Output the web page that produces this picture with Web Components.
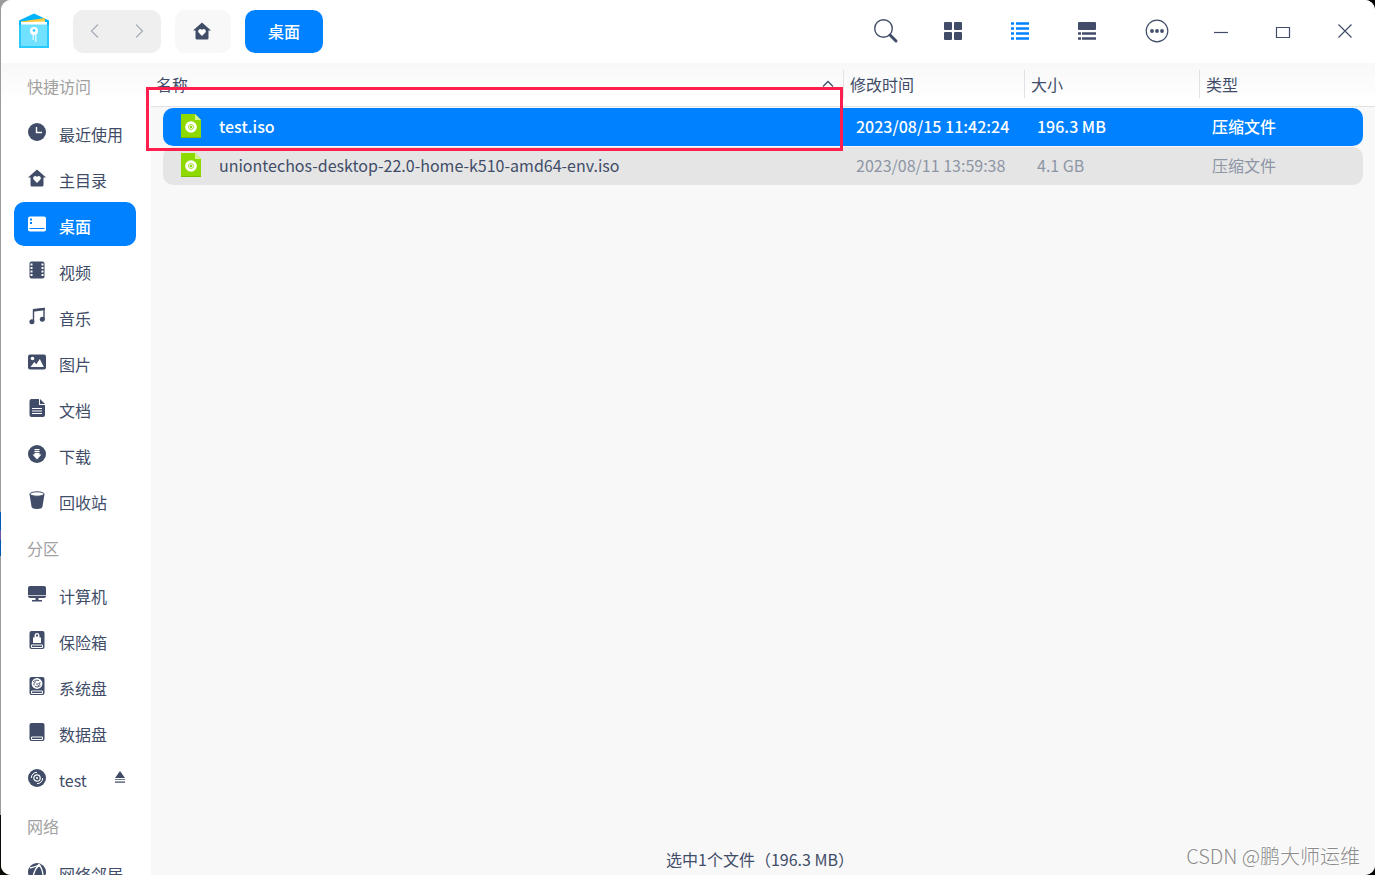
<!DOCTYPE html>
<html lang="zh-CN">
<head>
<meta charset="utf-8">
<title>文件管理器</title>
<style>
  * { box-sizing: border-box; }
  html {
    height: 100%;
    background:
      linear-gradient(#9c9c9c 0 512px, #0059b3 512px 530px, #6a57a5 530px 540px, #0059b3 540px 556px, #9c9c9c 556px 815px, #0b0b06 815px) left / 12px 100% no-repeat,
      #000;
  }
  body {
    margin: 0;
    height: 100%;
    overflow: hidden;
    color: #414d68;
    font: 16px/24px "Noto Sans CJK SC", "Noto Sans", sans-serif;
  }
</style>
</head>
<body>
<file-window>
  <title-bar slot="title" place="桌面"></title-bar>
  <side-group slot="side" heading="快捷访问">
    <side-item icon="recent">最近使用</side-item>
    <side-item icon="home">主目录</side-item>
    <side-item icon="desktop" active>桌面</side-item>
    <side-item icon="video">视频</side-item>
    <side-item icon="music">音乐</side-item>
    <side-item icon="picture">图片</side-item>
    <side-item icon="document">文档</side-item>
    <side-item icon="download">下载</side-item>
    <side-item icon="trash">回收站</side-item>
  </side-group>
  <side-group slot="side" heading="分区">
    <side-item icon="computer">计算机</side-item>
    <side-item icon="vault">保险箱</side-item>
    <side-item icon="system">系统盘</side-item>
    <side-item icon="disk">数据盘</side-item>
    <side-item icon="disc" ejectable>test</side-item>
  </side-group>
  <side-group slot="side" heading="网络">
    <side-item icon="network">网络邻居</side-item>
  </side-group>
  <file-table></file-table>
  <span slot="status">选中1个文件（196.3 MB）</span>
  <span slot="mark">CSDN @鹏大师运维</span>
</file-window>

<script>
// [width, height, svg content]
const icons = {
  logo: [34, 38, `
    <path d="M2 8.500 17 1.500l15 7V36H2z" fill="#00b4ff"/>
    <path d="M4 9.500 28 6v6H4z" fill="#ffc93c"/>
    <path d="M4 10.500l24-2v3z" fill="#ffe28a"/>
    <rect x="4" y="10" width="26" height="8" fill="#fff"/>
    <path d="M2 13h30v23H2z" fill="#29cbff"/>
    <path d="M4 12.500h26V34H4z" fill="#72e1ff"/>
    <path d="M15.500 20h1.500v8h-1.500zM18 20h1.500v10H18z" fill="#d3f6ff"/>
    <circle cx="17" cy="19" r="4" fill="#fff"/>
    <circle cx="17" cy="18.500" r="1.300" fill="#1cc4fa"/>`],
  back: [18, 18, `<path d="M12 2.500 5.500 9l6.500 6.500" fill="none" stroke="currentColor" stroke-width="1.300"/>`],
  forward: [18, 18, `<path d="m6 2.500 6.500 6.500L6 15.500" fill="none" stroke="currentColor" stroke-width="1.300"/>`],
  search: [26, 26, `
    <circle cx="10.500" cy="10.500" r="8.800" fill="none" stroke="currentColor" stroke-width="1.400"/>
    <path d="m17 17 6 6" stroke="currentColor" stroke-width="3" stroke-linecap="round"/>`],
  grid: [18, 18, `<g fill="currentColor"><rect width="8" height="8" rx="1"/><rect x="10" width="8" height="8" rx="1"/><rect y="10" width="8" height="8" rx="1"/><rect x="10" y="10" width="8" height="8" rx="1"/></g>`],
  list: [18, 18, `<path d="M0 .3h3v2.400H0zM5 .3h13v2.400H5zM0 5.300h3v2.400H0zM5 5.300h13v2.400H5zM0 10.300h3v2.400H0zM5 10.300h13v2.400H5zM0 15.300h3v2.400H0zM5 15.300h13v2.400H5z" fill="currentColor"/>`],
  detail: [18, 18, `
    <rect width="18" height="8" rx="1" fill="currentColor"/>
    <path d="M0 10.300h3v2.400H0zM4 10.300h14v2.400H4zM0 15.300h3v2.400H0zM4 15.300h14v2.400H4z" fill="currentColor"/>`],
  more: [24, 24, `
    <circle cx="12" cy="12" r="10.800" fill="none" stroke="currentColor" stroke-width="1.200"/>
    <g fill="currentColor"><circle cx="7" cy="12" r="1.900"/><circle cx="12" cy="12" r="1.900"/><circle cx="17" cy="12" r="1.900"/></g>`],
  minimize: [16, 16, `<path d="M1 9.500h14" stroke="currentColor" stroke-width="1.200"/>`],
  maximize: [16, 16, `<path d="M1.500 4.500h13v10h-13z" fill="none" stroke="currentColor" stroke-width="1.200"/>`],
  close: [16, 16, `<path d="m1.500 1.500 13 13m0-13-13 13" stroke="currentColor" stroke-width="1.200"/>`],
  sort: [12, 8, `<path d="m1 6.500 5-5 5 5" fill="none" stroke="currentColor" stroke-width="1.300"/>`],
  recent: [18, 18, `
    <circle cx="9" cy="9" r="9" fill="currentColor"/>
    <path d="M8.500 4v5.500H14" fill="none" stroke="#fff" stroke-width="1.400"/>`],
  home: [18, 18, `
    <path d="M9 .5 18 8.500h-2.500V16q0 1.500-1.500 1.500H4Q2.500 17.500 2.500 16V8.500H0z" fill="currentColor"/>
    <path d="M9 14 5.600 10.600A2 2 0 0 1 9 7.900a2 2 0 0 1 3.400 2.700z" fill="#fff"/>`],
  desktop: [18, 18, `
    <rect y="1.500" width="18" height="15" rx="2" fill="currentColor"/>
    <path d="M2 3.500h2v2H2zM2 7h2v2H2z" fill="#0081ff"/>
    <path d="M1.500 13.500h15" stroke="#0081ff" stroke-width="1.200"/>`],
  video: [18, 18, `
    <rect x="1.500" y=".5" width="15" height="17" rx="2" fill="currentColor"/>
    <path d="M2.500 2.500h2v2h-2zM2.500 6h2v2h-2zM2.500 9.500h2v2h-2zM2.500 13h2v2h-2zM13.500 2.500h2v2h-2zM13.500 6h2v2h-2zM13.500 9.500h2v2h-2zM13.500 13h2v2h-2z" fill="#fff"/>`],
  music: [18, 18, `
    <path d="M5.500 14.500V3.200L16 1.500v11" fill="none" stroke="currentColor" stroke-width="1.400"/>
    <path d="M5 2 16.700.7v2.500L5 4.700z" fill="currentColor"/>
    <circle cx="3.900" cy="14.800" r="2.500" fill="currentColor"/><circle cx="14.300" cy="12.200" r="2.500" fill="currentColor"/>`],
  picture: [18, 18, `
    <rect y="1.500" width="18" height="15" rx="2" fill="currentColor"/>
    <circle cx="4.500" cy="5.500" r="1.800" fill="#fff"/>
    <path d="m2.500 14 3.800-5 2 2.200L11.800 6l4 8z" fill="#fff"/>`],
  document: [18, 18, `
    <path d="M3.500 0H11v6h6v10q0 2-2 2H3.500q-2 0-2-2V2q0-2 2-2z" fill="currentColor"/>
    <path d="m12 0 5 5h-5z" fill="currentColor"/>
    <path d="M4 9.500h10M4 12h10M4 14.500h10" stroke="#fff" stroke-width="1.200"/>`],
  download: [18, 18, `
    <circle cx="9" cy="9" r="9" fill="currentColor"/>
    <path d="M6.500 4h5v1.300h-5zM6.500 6h5v1.200h-5zM6.500 8h5v1.500h2L9 14.500 4.500 9.500h2z" fill="#fff"/>`],
  trash: [18, 18, `
    <path d="M1.500 3h15l-2 12.500Q14 18 9 18t-5.500-2.500z" fill="currentColor"/>
    <ellipse cx="9" cy="3" rx="7" ry="2.200" fill="#fff" stroke="currentColor"/>`],
  computer: [18, 18, `
    <rect y="1" width="18" height="12" rx="2" fill="currentColor"/>
    <path d="M0 10.500h18" stroke="#fff" stroke-width=".7"/>
    <path d="M7.500 13h3v2h3.500v1.500H4V15h3.500z" fill="currentColor"/>`],
  vault: [18, 18, `
    <rect x="1.500" width="15" height="18" rx="2" fill="currentColor"/>
    <path d="M5 12V6.500h1.500V5a2.500 3 0 0 1 5 0v1.500H13V12z" fill="#fff"/>
    <path d="M8 5.500V4.500a1 1.200 0 0 1 2 0v1z" fill="currentColor"/>
    <path d="M3.500 14h11v2.500h-11z" fill="none" stroke="#fff"/>`],
  system: [18, 18, `
    <rect x="1.500" width="15" height="18" rx="2" fill="currentColor"/>
    <circle cx="9" cy="6.500" r="5.400" fill="#fff"/>
    <path d="M5 5q2.500-3 6-1.500M12.500 8.500Q10 11 7 9.500M6 8.500Q5 6 8 4.500M12 5q.5 3-2.500 4M8 7q1.500 1 2.500-1" fill="none" stroke="currentColor" stroke-width=".9"/>
    <path d="M3.500 14h11v2.500h-11z" fill="none" stroke="#fff"/>`],
  disk: [18, 18, `
    <rect x="1.500" width="15" height="18" rx="2" fill="currentColor"/>
    <path d="M3.500 14h11v2.500h-11z" fill="none" stroke="#fff"/>`],
  disc: [18, 18, `
    <circle cx="9" cy="9" r="9" fill="currentColor"/>
    <circle cx="9" cy="9" r="3.200" fill="none" stroke="#fff" stroke-width="1.200"/>
    <circle cx="9" cy="9" r="1.100" fill="#fff"/>
    <path d="M3.300 9A5.700 5.700 0 0 1 9 3.300M14.700 9A5.700 5.700 0 0 1 9 14.700" fill="none" stroke="#fff"/>`],
  network: [18, 18, `
    <circle cx="9" cy="9" r="9" fill="currentColor"/>
    <path d="M2 5q5-1 9-3M5 16Q5 8 11 2q4 4 4 12" fill="none" stroke="#fff" stroke-width="1.300"/>
    <circle cx="11" cy="2.500" r="1.600" fill="#fff"/>`],
  eject: [12, 12, `<path d="m6 0 5 7H1zM1 8h10v.8H1zM1 10.500h10v1.200H1z" fill="currentColor"/>`],
  iso: [22, 26, `
    <path d="M1 1h14l6 6v18H1z" fill="#8dd900"/>
    <path d="M15 1v6h6z" fill="#d4f58c"/>
    <path d="M1 24.500h20" stroke="#79bd00"/>
    <circle cx="11" cy="14" r="5.800" fill="#fff"/>
    <circle cx="11" cy="14" r="2.500" fill="none" stroke="#8dd900" stroke-width=".8"/>
    <circle cx="11" cy="14" r="1.200" fill="#8dd900"/>`],
};

class FileIcon extends HTMLElement {
  connectedCallback() {
    const [w, h, shape] = icons[this.getAttribute("name")];
    this.attachShadow({ mode: "open" }).innerHTML = `
      <style>
        :host { display: inline-flex; flex: none; }
        svg { display: block; }
      </style>
      <svg width="${w}" height="${h}" viewBox="0 0 ${w} ${h}" aria-hidden="true">${shape}</svg>`;
  }
}

class FileWindow extends HTMLElement {
  constructor() {
    super();
    this.attachShadow({ mode: "open" }).innerHTML = `
      <style>
        * { box-sizing: border-box; }
        :host {
          display: flex;
          flex-direction: column;
          height: 100%;
          margin-left: 1px;
          border-radius: 10px;
          overflow: hidden;
          background: #fff;
        }
        .body { display: flex; flex: 1; min-height: 0; }
        nav {
          flex: none;
          width: 150px;
          overflow: hidden;
          background: linear-gradient(#f8f8f8, #fff 38px);
        }
        main {
          position: relative;
          flex: 1;
          min-width: 0;
          display: flex;
          flex-direction: column;
          background: #f8f8f8;
        }
        .files { flex: 1; }
        footer { padding: 2px 6px 4px 0; text-align: center; }
        .mark {
          position: absolute;
          right: 15px;
          bottom: 4px;
          color: #8c8c8c;
          font-size: 20px;
          line-height: 30px;
          font-weight: 300;
          text-shadow: -1px -1px #fff;
        }
      </style>
      <slot name="title"></slot>
      <div class="body">
        <nav><slot name="side"></slot></nav>
        <main>
          <div class="files"><slot></slot></div>
          <footer><slot name="status"></slot></footer>
          <div class="mark"><slot name="mark"></slot></div>
        </main>
      </div>`;
  }
}

class TitleBar extends HTMLElement {
  connectedCallback() {
    this.attachShadow({ mode: "open" }).innerHTML = `
      <style>
        * { box-sizing: border-box; }
        :host {
          display: flex;
          flex: none;
          align-items: center;
          justify-content: space-between;
          height: 63px;
          padding: 0 10px 1px 16px;
          background: #fff;
        }
        div { display: flex; align-items: center; }
        button {
          display: flex;
          align-items: center;
          justify-content: center;
          width: 40px;
          height: 43px;
          padding: 0;
          border: 0;
          border-radius: 10px;
          background: none;
          color: inherit;
          font: inherit;
        }
        .left { gap: 14px; }
        .history {
          margin-left: 8px;
          border-radius: 10px;
          background: #efefef;
          color: #a9afba;
        }
        .history button { width: 44px; }
        .home { width: 56px; padding-right: 2px; background: #f8f8f8; }
        .place { width: 78px; background: #0081ff; color: #fff; font-weight: 500; }
        .views { gap: 27px; margin-right: 30px; }
        .more { margin-right: 24px; }
        .controls { gap: 22px; }
        .on { color: #0081ff; }
      </style>
      <div class="left">
        <file-icon name="logo"></file-icon>
        <div class="history">
          <button aria-label="后退" disabled><file-icon name="back"></file-icon></button>
          <button aria-label="前进" disabled><file-icon name="forward"></file-icon></button>
        </div>
        <button class="home" aria-label="主目录"><file-icon name="home"></file-icon></button>
        <button class="place">${this.getAttribute("place")}</button>
      </div>
      <div class="right">
        <div class="views">
          <button aria-label="搜索"><file-icon name="search"></file-icon></button>
          <button aria-label="图标视图"><file-icon name="grid"></file-icon></button>
          <button class="on" aria-label="列表视图"><file-icon name="list"></file-icon></button>
          <button aria-label="详细视图"><file-icon name="detail"></file-icon></button>
        </div>
        <button class="more" aria-label="更多"><file-icon name="more"></file-icon></button>
        <div class="controls">
          <button aria-label="最小化"><file-icon name="minimize"></file-icon></button>
          <button aria-label="最大化"><file-icon name="maximize"></file-icon></button>
          <button aria-label="关闭"><file-icon name="close"></file-icon></button>
        </div>
      </div>`;
  }
}

class SideGroup extends HTMLElement {
  connectedCallback() {
    this.attachShadow({ mode: "open" }).innerHTML = `
      <style>
        :host { display: block; padding-bottom: 2px; }
        h2 {
          margin: 0;
          padding: 0 26px;
          color: #a1a1a1;
          font-size: 16px;
          font-weight: 400;
          line-height: 46px;
        }
      </style>
      <h2>${this.getAttribute("heading")}</h2>
      <slot></slot>`;
  }
}

class SideItem extends HTMLElement {
  connectedCallback() {
    this.attachShadow({ mode: "open" }).innerHTML = `
      <style>
        * { box-sizing: border-box; }
        :host { display: flex; align-items: center; height: 46px; padding: 0 15px 0 13px; }
        a {
          flex: 1;
          display: flex;
          align-items: center;
          height: 44px;
          padding-left: 14px;
          border-radius: 10px;
          color: inherit;
          text-decoration: none;
          white-space: nowrap;
        }
        span { padding: 3px 0 0 13px; }
        :host([active]) a { background: #0081ff; color: #fff; font-weight: 500; }
        :host([ejectable]) { padding-right: 25px; }
        button { padding: 0; border: 0; background: none; color: inherit; line-height: 12px; }
      </style>
      <a href="#"><file-icon name="${this.getAttribute("icon")}"></file-icon><span><slot></slot></span></a>
      ${this.hasAttribute("ejectable") ? `<button aria-label="弹出"><file-icon name="eject"></file-icon></button>` : ""}`;
  }
}

const files = [
  { name: "test.iso", time: "2023/08/15 11:42:24", size: "196.3 MB", type: "压缩文件", selected: true },
  { name: "uniontechos-desktop-22.0-home-k510-amd64-env.iso", time: "2023/08/11 13:59:38", size: "4.1 GB", type: "压缩文件" },
];

class FileTable extends HTMLElement {
  connectedCallback() {
    this.attachShadow({ mode: "open" }).innerHTML = `
      <style>
        * { box-sizing: border-box; }
        :host { display: block; position: relative; }
        table { width: 100%; table-layout: fixed; border-collapse: separate; border-spacing: 0; }
        thead { background: linear-gradient(#f8f8f8, #fff 38px); }
        th {
          height: 44px;
          padding: 0 0 2px;
          border-bottom: 1px solid #e2e2e2;
          font-weight: 400;
        }
        th:nth-child(2) { width: 181px; }
        th:nth-child(3) { width: 175px; }
        th:nth-child(4) { width: 176px; }
        th button {
          display: flex;
          align-items: center;
          justify-content: space-between;
          width: 100%;
          height: 28px;
          padding: 1px 9px 0 6px;
          border: 0;
          border-left: 1px solid #e2e2e2;
          background: none;
          color: inherit;
          font: inherit;
        }
        th:first-child button { padding-left: 5px; border-left: 0; }
        td {
          height: 39px;
          padding: 0 0 3px 13px;
          border-top: 1px solid transparent;
          background: #e5e5e5 padding-box;
          color: #8d96a5;
          white-space: nowrap;
        }
        /* the side borders stay clear, so the row's rounded bar is inset */
        td:first-child {
          padding-left: 17px;
          border-left: 12px solid transparent;
          border-top-left-radius: 22px 11px;
          border-bottom-left-radius: 22px 10px;
          color: #414d68;
        }
        td:last-child {
          border-right: 12px solid transparent;
          border-top-right-radius: 22px 11px;
          border-bottom-right-radius: 22px 10px;
        }
        .selected td { background-color: #0081ff; color: #fff; font-weight: 500; }
        tr:first-child td { padding-bottom: 2px; }
        .name { display: flex; align-items: center; gap: 17px; }
        .frame {
          position: absolute;
          top: 24px;
          left: -5px;
          right: 532px;
          height: 64px;
          border: 3px solid #ff1f4f;
          pointer-events: none;
        }
      </style>
      <table>
        <thead>
          <tr>
            <th><button>名称<file-icon name="sort"></file-icon></button></th>
            <th><button>修改时间</button></th>
            <th><button>大小</button></th>
            <th><button>类型</button></th>
          </tr>
        </thead>
        <tbody>
          ${files.map((f) => `
          <tr class="${f.selected ? "selected" : ""}">
            <td><div class="name"><file-icon name="iso"></file-icon>${f.name}</div></td>
            <td>${f.time}</td>
            <td>${f.size}</td>
            <td>${f.type}</td>
          </tr>`).join("")}
        </tbody>
      </table>
      <div class="frame"></div>`;
  }
}

customElements.define("file-icon", FileIcon);
customElements.define("file-window", FileWindow);
customElements.define("title-bar", TitleBar);
customElements.define("side-group", SideGroup);
customElements.define("side-item", SideItem);
customElements.define("file-table", FileTable);
</script>
</body>
</html>
